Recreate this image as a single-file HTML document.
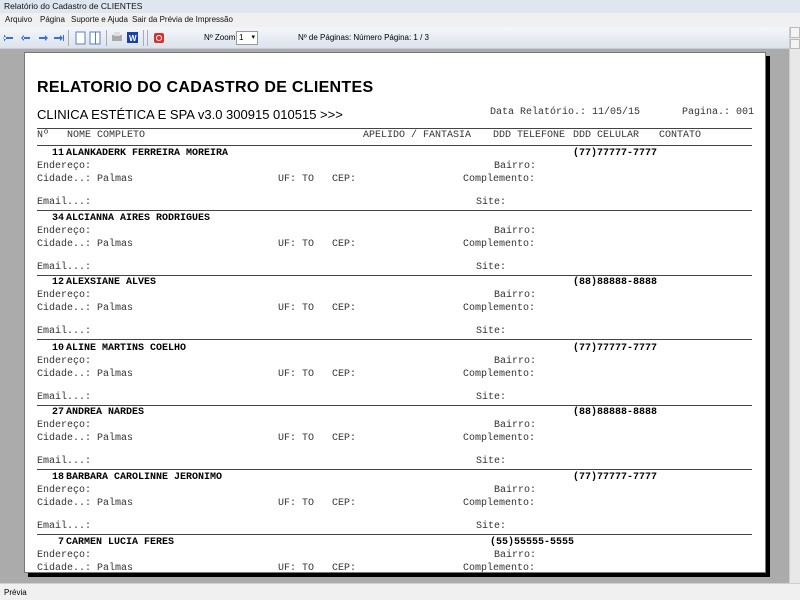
<!DOCTYPE html>
<html><head><meta charset="utf-8">
<style>
*{margin:0;padding:0;box-sizing:border-box}
html,body{width:800px;height:600px;overflow:hidden}
body{background:#ababab;font-family:"Liberation Sans",sans-serif;position:relative}
.abs{position:absolute;white-space:pre}
#title{left:0;top:0;width:800px;height:13px;background:#dfe6f0;font-size:8.5px;line-height:13px;padding-left:4px;color:#111}
#menu{left:0;top:13px;width:800px;height:14px;background:#f0f0f0;font-size:8px;line-height:14px;color:#111}
#tool{left:0;top:27px;width:789px;height:22px;background:linear-gradient(#f4f6fa,#dde3ec);border-bottom:1px solid #c8cdd5}
#scroll{left:789px;top:27px;width:11px;height:556px;background:#e8e8e8;border-left:1px solid #ccc}
#status{left:0;top:583px;width:800px;height:17px;background:#f0f0f0;border-top:1px solid #d0d0d0;font-size:8px;line-height:17px;padding-left:4px}
#page{left:24px;top:52px;width:742px;height:521px;background:#fff;border:1px solid #777}
#sh1{left:766px;top:56px;width:4px;height:521px;background:#000}
.m{font-family:"Liberation Mono",monospace;font-size:10px;line-height:12px;color:#333}
.b{font-weight:bold;color:#000}
.hl{position:absolute;left:37px;width:715px;height:1px;background:#444}
</style></head><body>
<div class="abs" id="title">Relatório do Cadastro de CLIENTES</div>
<div class="abs" id="menu"><span style="position:absolute;left:5px">Arquivo</span><span style="position:absolute;left:40px">Página</span><span style="position:absolute;left:71px">Suporte e Ajuda</span><span style="position:absolute;left:132px">Sair da Prévia de Impressão</span></div>
<div class="abs" id="tool"></div>
<svg class="abs" style="left:0;top:27px" width="200" height="22">
<g fill="#3a6ed8"><path d="M5 10h8v2H5z M6 9l-3 2 3 2z M4 8h1v6H4z"/><path d="M23 10h7v2h-7z M24 8l-3 3 3 3z"/><path d="M39 10h7v2h-7z M45 8l3 3-3 3z"/><path d="M54 10h7v2h-7z M60 8l3 3-3 3z M63 8h1v6h-1z"/></g>
<rect x="68" y="3" width="1" height="16" fill="#aab"/>
<rect x="76" y="5" width="9" height="12" fill="#fff" stroke="#5a7fb8"/>
<rect x="90" y="5" width="10" height="12" fill="#fff" stroke="#5a7fb8"/><rect x="95" y="5" width="1" height="12" fill="#5a7fb8"/>
<rect x="106" y="3" width="1" height="16" fill="#aab"/>
<rect x="112" y="8" width="10" height="6" fill="#aaa"/><rect x="114" y="5" width="6" height="4" fill="#ddd"/>
<rect x="127" y="5" width="11" height="11" fill="#1a3fb0"/><text x="129" y="14" font-size="8" fill="#fff" font-family="Liberation Sans" font-weight="bold">W</text>
<rect x="143" y="3" width="1" height="16" fill="#aab"/><rect x="147" y="3" width="1" height="16" fill="#aab"/>
<rect x="154" y="6" width="10" height="10" rx="2" fill="#d93030"/><circle cx="159" cy="11" r="2.5" fill="none" stroke="#fff"/>
</svg>
<div class="abs" style="left:204px;top:33px;font-size:8px">Nº Zoom</div>
<div class="abs" style="left:236px;top:31px;width:22px;height:14px;background:#fff;border:1px solid #999;font-size:8px;line-height:12px;padding-left:2px">1 <span style="font-size:7px;position:absolute;right:2px">▾</span></div>
<div class="abs" style="left:298px;top:33px;font-size:8px">Nº de Páginas: Número Página: 1 / 3</div>
<div class="abs" id="scroll"><div style="position:absolute;left:0;top:0;width:10px;height:11px;background:#f4f4f4;border:1px solid #bbb"></div><div style="position:absolute;left:0;top:12px;width:10px;height:10px;background:#f4f4f4;border:1px solid #bbb"></div></div>
<div class="abs" id="page"></div>
<div class="abs" id="sh1"></div>

<div class="abs" style="left:37px;top:79px;font-size:16px;font-weight:bold;color:#000;letter-spacing:0.3px">RELATORIO DO CADASTRO DE CLIENTES</div>
<div class="abs" style="left:37px;top:107px;font-size:13px;color:#000">CLINICA ESTÉTICA E SPA v3.0 300915 010515 &gt;&gt;&gt;</div>
<div class="abs m" style="left:490px;top:107px">Data Relatório.: 11/05/15</div>
<div class="abs m" style="left:682px;top:107px">Pagina.: 001</div>
<div class="hl" style="top:128px"></div>
<div class="abs m" style="left:37px;top:130px">Nº</div>
<div class="abs m" style="left:67px;top:130px">NOME COMPLETO</div>
<div class="abs m" style="left:363px;top:130px">APELIDO / FANTASIA</div>
<div class="abs m" style="left:493px;top:130px">DDD TELEFONE</div>
<div class="abs m" style="left:573px;top:130px">DDD CELULAR</div>
<div class="abs m" style="left:659px;top:130px">CONTATO</div>
<div class="hl" style="top:145px"></div>

<div class="abs" style="left:0;top:148px;width:800px">
<div class="abs m b" style="left:37px;top:0;width:27px;text-align:right">11</div><div class="abs m b" style="left:66px;top:0">ALANKADERK FERREIRA MOREIRA</div><div class="abs m b" style="left:573px;top:0">(77)77777-7777</div>
<div class="abs m" style="left:37px;top:13px">Endereço:</div><div class="abs m" style="left:494px;top:13px">Bairro:</div>
<div class="abs m" style="left:37px;top:26px">Cidade..: Palmas</div><div class="abs m" style="left:278px;top:26px">UF: TO   CEP:</div><div class="abs m" style="left:463px;top:26px">Complemento:</div>
<div class="abs m" style="left:37px;top:49px">Email...:</div><div class="abs m" style="left:476px;top:49px">Site:</div>
<div class="hl" style="top:62px"></div></div>

<div class="abs" style="left:0;top:213px;width:800px">
<div class="abs m b" style="left:37px;top:0;width:27px;text-align:right">34</div><div class="abs m b" style="left:66px;top:0">ALCIANNA AIRES RODRIGUES</div>
<div class="abs m" style="left:37px;top:13px">Endereço:</div><div class="abs m" style="left:494px;top:13px">Bairro:</div>
<div class="abs m" style="left:37px;top:26px">Cidade..: Palmas</div><div class="abs m" style="left:278px;top:26px">UF: TO   CEP:</div><div class="abs m" style="left:463px;top:26px">Complemento:</div>
<div class="abs m" style="left:37px;top:49px">Email...:</div><div class="abs m" style="left:476px;top:49px">Site:</div>
<div class="hl" style="top:62px"></div></div>

<div class="abs" style="left:0;top:277px;width:800px">
<div class="abs m b" style="left:37px;top:0;width:27px;text-align:right">12</div><div class="abs m b" style="left:66px;top:0">ALEXSIANE ALVES</div><div class="abs m b" style="left:573px;top:0">(88)88888-8888</div>
<div class="abs m" style="left:37px;top:13px">Endereço:</div><div class="abs m" style="left:494px;top:13px">Bairro:</div>
<div class="abs m" style="left:37px;top:26px">Cidade..: Palmas</div><div class="abs m" style="left:278px;top:26px">UF: TO   CEP:</div><div class="abs m" style="left:463px;top:26px">Complemento:</div>
<div class="abs m" style="left:37px;top:49px">Email...:</div><div class="abs m" style="left:476px;top:49px">Site:</div>
<div class="hl" style="top:62px"></div></div>

<div class="abs" style="left:0;top:343px;width:800px">
<div class="abs m b" style="left:37px;top:0;width:27px;text-align:right">10</div><div class="abs m b" style="left:66px;top:0">ALINE MARTINS COELHO</div><div class="abs m b" style="left:573px;top:0">(77)77777-7777</div>
<div class="abs m" style="left:37px;top:13px">Endereço:</div><div class="abs m" style="left:494px;top:13px">Bairro:</div>
<div class="abs m" style="left:37px;top:26px">Cidade..: Palmas</div><div class="abs m" style="left:278px;top:26px">UF: TO   CEP:</div><div class="abs m" style="left:463px;top:26px">Complemento:</div>
<div class="abs m" style="left:37px;top:49px">Email...:</div><div class="abs m" style="left:476px;top:49px">Site:</div>
<div class="hl" style="top:62px"></div></div>

<div class="abs" style="left:0;top:407px;width:800px">
<div class="abs m b" style="left:37px;top:0;width:27px;text-align:right">27</div><div class="abs m b" style="left:66px;top:0">ANDREA NARDES</div><div class="abs m b" style="left:573px;top:0">(88)88888-8888</div>
<div class="abs m" style="left:37px;top:13px">Endereço:</div><div class="abs m" style="left:494px;top:13px">Bairro:</div>
<div class="abs m" style="left:37px;top:26px">Cidade..: Palmas</div><div class="abs m" style="left:278px;top:26px">UF: TO   CEP:</div><div class="abs m" style="left:463px;top:26px">Complemento:</div>
<div class="abs m" style="left:37px;top:49px">Email...:</div><div class="abs m" style="left:476px;top:49px">Site:</div>
<div class="hl" style="top:62px"></div></div>

<div class="abs" style="left:0;top:472px;width:800px">
<div class="abs m b" style="left:37px;top:0;width:27px;text-align:right">18</div><div class="abs m b" style="left:66px;top:0">BARBARA CAROLINNE JERONIMO</div><div class="abs m b" style="left:573px;top:0">(77)77777-7777</div>
<div class="abs m" style="left:37px;top:13px">Endereço:</div><div class="abs m" style="left:494px;top:13px">Bairro:</div>
<div class="abs m" style="left:37px;top:26px">Cidade..: Palmas</div><div class="abs m" style="left:278px;top:26px">UF: TO   CEP:</div><div class="abs m" style="left:463px;top:26px">Complemento:</div>
<div class="abs m" style="left:37px;top:49px">Email...:</div><div class="abs m" style="left:476px;top:49px">Site:</div>
<div class="hl" style="top:62px"></div></div>

<div class="abs" style="left:0;top:537px;width:800px">
<div class="abs m b" style="left:37px;top:0;width:27px;text-align:right">7</div><div class="abs m b" style="left:66px;top:0">CARMEN LUCIA FERES</div><div class="abs m b" style="left:490px;top:0">(55)55555-5555</div>
<div class="abs m" style="left:37px;top:13px">Endereço:</div><div class="abs m" style="left:494px;top:13px">Bairro:</div>
<div class="abs m" style="left:37px;top:26px">Cidade..: Palmas</div><div class="abs m" style="left:278px;top:26px">UF: TO   CEP:</div><div class="abs m" style="left:463px;top:26px">Complemento:</div>
</div>
<div class="abs" style="left:24px;top:573px;width:765px;height:10px;background:#ababab"></div>
<div class="abs" style="left:28px;top:573px;width:742px;height:4px;background:#000"></div>
<div class="abs" id="status">Prévia</div>
</body></html>
